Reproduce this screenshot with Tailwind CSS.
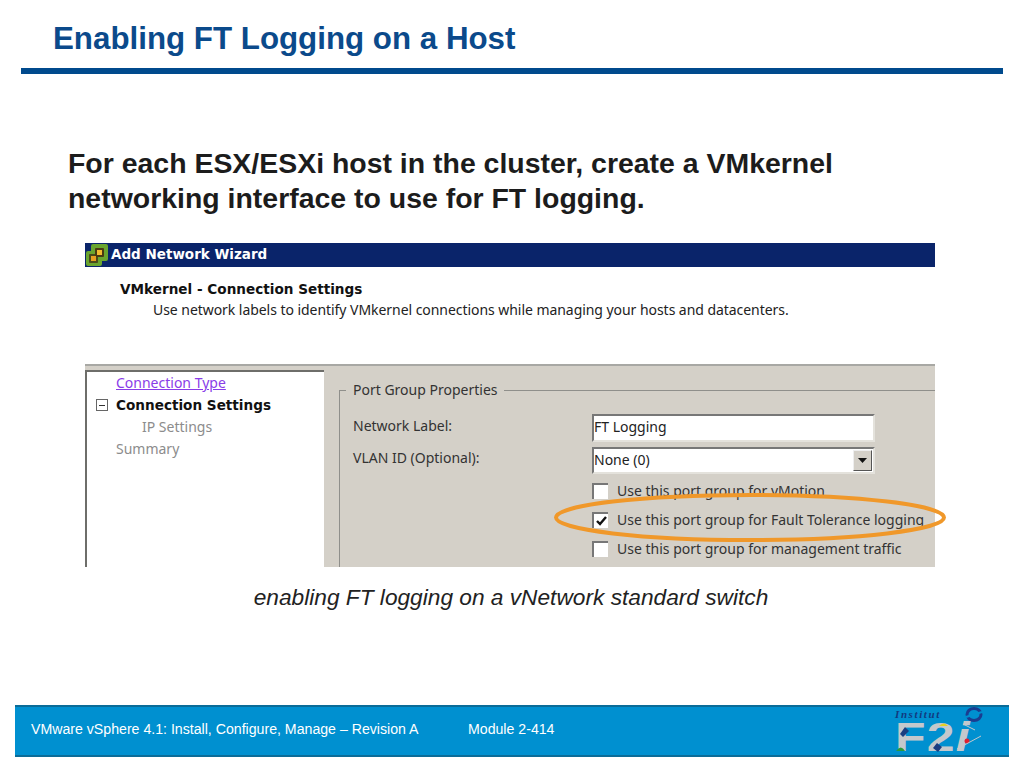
<!DOCTYPE html>
<html><head><meta charset="utf-8"><script src="https://cdn.jsdelivr.net/npm/@tailwindcss/browser@4"></script></head>
<body class="bg-white">
<div class="w-[1024px] h-[768px] flex flex-col font-['Liberation_Sans',sans-serif] overflow-hidden">
  <div class="h-[68px] pl-[53px] pt-[20px] shrink-0">
    <h1 class="text-[31.3px] leading-[38px] font-bold text-[#0b4a8b]">Enabling FT Logging on a Host</h1>
  </div>
  <div class="ml-[21px] w-[982px] h-[6px] bg-[#004a8d] shrink-0"></div>
  <p class="ml-[68px] mt-[72px] text-[28.45px] leading-[35px] font-bold text-[#1c1c1c] whitespace-nowrap shrink-0">For each ESX/ESXi host in the cluster, create a VMkernel<br>networking interface to use for FT logging.</p>
  <div class="relative ml-[85px] mt-[27px] w-[850px] h-[324px] shrink-0 bg-white font-['Noto_Sans',sans-serif] text-[14px] text-[#333]">
    <div class="h-[24px] bg-[#0a246a] flex items-center pb-[2px] gap-[2px] overflow-visible">
      <svg width="24" height="24" viewBox="0 0 24 24" class="-mb-[2px] shrink-0"><path d="M8 1h13q2 0 2 2v13q0 2-2 2h-4v3q0 2-2 2H3q-2 0-2-2V10q0-2 2-2h3V3q0-2 2-2z" fill="#6aa52e"/><rect x="4" y="11" width="9" height="9" rx="1" fill="#4a4a1a"/><rect x="10" y="5" width="9" height="9" rx="1" fill="#4a3a12"/><rect x="6" y="13" width="5" height="5" fill="#e8a020"/><rect x="12" y="7" width="5" height="5" fill="#f4bc30"/></svg>
      <span class="font-['DejaVu_Sans',sans-serif] text-[13.5px] leading-[20px] font-bold text-white">Add Network Wizard</span>
    </div>
    <div class="h-[99px] pl-[35px] pt-[12px] border-b-2 border-[#a8a8a4] text-[#222]">
      <div class="font-['DejaVu_Sans',sans-serif] text-[13.6px] leading-[20px] font-bold text-[#111]">VMkernel - Connection Settings</div>
      <div class="pl-[33px] text-[14px] leading-[24px] -mt-[1px] tracking-[-0.05px]">Use network labels to identify VMkernel connections while managing your hosts and datacenters.</div>
    </div>
    <div class="flex h-[201px] bg-[#d4d0c8] pt-[4px]">
      <div class="w-[239px] bg-white border-t-2 border-l-2 border-[#6e6e6a] relative shrink-0 pl-[29px] leading-[22px]">
        <div class="text-[#8a3ce8] underline">Connection Type</div>
        <div class="font-['DejaVu_Sans',sans-serif] text-[13.6px] font-bold text-[#111] flex items-center relative">
          <span class="absolute -left-[20px] top-[5px] w-[12px] h-[12px] border border-[#666] flex items-center justify-center"><span class="w-[6px] h-[1px] bg-[#333]"></span></span>Connection Settings
        </div>
        <div class="pl-[26px] text-[#8c8c8c]">IP Settings</div>
        <div class="text-[#8c8c8c]">Summary</div>
      </div>
      <div class="flex-1 pl-[15px] pt-[20px] min-w-0">
        <div class="relative border-l border-t border-[#8f8f8b] h-[177px] pt-[24px] pl-[13px]">
          <span class="absolute left-[6px] -top-[11px] bg-[#d4d0c8] px-[7px] leading-[20px] whitespace-nowrap">Port Group Properties</span>
          <div class="flex">
            <div class="w-[239px] shrink-0 leading-[20px] pt-[1px]">
              <div class="h-[32px]">Network Label:</div>
              <div>VLAN ID (Optional):</div>
            </div>
            <div class="w-[290px] -mt-[1px] shrink-0">
              <div class="h-[28px] w-[283px] bg-white border-2 border-[#777] border-r-[#e4e2dc] border-b-[#e4e2dc] leading-[22px] text-[#222]">FT Logging</div>
              <div class="h-[27px] w-[283px] mt-[5px] bg-white border-2 border-[#777] border-r-[#e4e2dc] border-b-[#e4e2dc] leading-[22px] text-[#222] flex justify-between">
                <span>None (0)</span>
                <span class="w-[19px] h-[21px] mt-[1px] mr-[1px] bg-[#d4d0c8] border border-[#555] border-t-[#eee] border-l-[#eee] flex items-center justify-center"><svg width="9" height="5" viewBox="0 0 9 5"><path d="M0 0h9L4.5 5z" fill="#111"/></svg></span>
              </div>
              <div class="mt-[8px] flex flex-col gap-[12px]">
                <div class="flex items-center h-[17px] gap-[9px] whitespace-nowrap"><span class="w-[16px] h-[16px] bg-white border-t-2 border-l-2 border-[#777] shrink-0"></span>Use this port group for vMotion</div>
                <div class="flex items-center h-[17px] gap-[9px] whitespace-nowrap"><span class="w-[16px] h-[16px] bg-white border-t-2 border-l-2 border-[#777] shrink-0 flex items-center justify-center"><svg width="11" height="10" viewBox="0 0 11 10"><path d="M1 5l3 3 6-7" fill="none" stroke="#111" stroke-width="2.4"/></svg></span>Use this port group for Fault Tolerance logging</div>
                <div class="flex items-center h-[17px] gap-[9px] whitespace-nowrap"><span class="w-[16px] h-[16px] bg-white border-t-2 border-l-2 border-[#777] shrink-0"></span>Use this port group for management traffic</div>
              </div>
            </div>
          </div>
        </div>
      </div>
    </div>
    <svg class="absolute left-[465px] top-[245px] pointer-events-none" width="400" height="56" viewBox="0 0 400 56"><ellipse cx="200" cy="29.5" rx="194" ry="22.5" fill="none" stroke="#f0982a" stroke-width="4"/></svg>
  </div>
  <p class="mt-[17px] text-center text-[22.7px] leading-[26px] italic text-[#222] shrink-0 pr-[2px]">enabling FT logging on a vNetwork standard switch</p>
  <div class="ml-[15px] mt-[95px] w-[994px] h-[52px] bg-[#0090d0] border-t-2 border-b-2 border-[#0b6c98] shrink-0 flex items-center pl-[16px] pb-[3px] text-[14.15px] text-white relative">
    <span class="w-[437px] shrink-0">VMware vSphere 4.1: Install, Configure, Manage – Revision A</span>
    <span>Module 2-414</span>
    <div class="absolute left-[880px] top-0 w-[90px] h-[48px]">
      <div class="absolute left-0 top-[2px] text-[11px] leading-[10px] italic font-bold tracking-[1.6px] text-[#123a80] font-['Liberation_Serif',serif]">Institut</div>
      <svg class="absolute left-[69px] top-0" width="20" height="15" viewBox="0 0 20 15"><ellipse cx="10" cy="7.5" rx="7" ry="6" fill="none" stroke="#1a3d90" stroke-width="3"/><path d="M2 10L18 5" stroke="#0090d0" stroke-width="2"/></svg>
      <div class="absolute left-0 top-[15px] text-[40px] leading-[30px] font-bold text-[#c4c8cc] tracking-[1px] origin-left scale-x-[1.25] whitespace-nowrap">F2<span class="italic">i</span></div>
      <svg class="absolute left-0 top-0" width="90" height="48" viewBox="0 0 90 48"><path d="M1 44q5-7 9 0z" fill="#2a9a3a"/><path d="M10 20l4 4-6 6-3-3z" fill="#1a3d80"/><path d="M44 19q5-5 9 0z" fill="#e4d020"/><path d="M42 36l5 4-4 5-5-4z" fill="#1a3d80"/><circle cx="72" cy="34" r="2.5" fill="#e02030"/><path d="M62 42L86 29M68 17l12 6" stroke="#c4c8cc" stroke-width="1" fill="none"/></svg>
    </div>
  </div>
</div>
</body></html>
